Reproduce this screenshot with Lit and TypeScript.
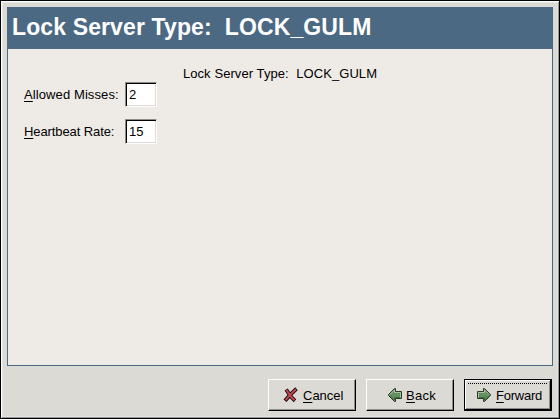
import { LitElement, html, svg, css } from "lit";
import { customElement, property } from "lit/decorators.js";

const arrow = svg`
  <path d="M1.500 4.500H7.500V1.500H8.500L14.500 7.500V8.500L8.500 14.500H7.500V11.500H1.500Z" fill="#648f60" stroke="#2b3a29" stroke-width="1"/>
  <path d="M2.500 10.500V5.500H8.500V3L13 7.500" fill="none" stroke="#a5bfa0"/>
  <path d="M3 10.500H8.500V13L13 8.500" fill="none" stroke="#3f6a39"/>`;

@customElement("wizard-button")
class WizardButton extends LitElement {
  @property() label = "";
  @property() icon = "";
  @property({ type: Boolean, reflect: true }) default = false;

  static styles = css`
    :host { display: block; width: 88px; height: 32px; }
    .button {
      box-sizing: border-box; width: 88px; height: 32px; padding: 0 0 0 14px; margin: 0;
      display: flex; align-items: center; justify-content: flex-start;
      border: 1px solid; border-color: #fff #000 #000 #fff; border-radius: 0;
      background: #dcdad5; color: #000; outline: none;
      box-shadow: inset -1px -1px #8d8b87;
      font: 13px/16px "Liberation Sans", Arial, sans-serif;
    }
    .back { padding-left: 20px; letter-spacing: 0.3px; }
    .forward { padding-left: 11px; letter-spacing: -0.25px; }
    :host([default]) .button {
      border-color: #000; position: relative;
      box-shadow: inset -1px -1px #000, inset 1px 1px #fff, inset -2px -2px #8d8b87;
    }
    :host([default]) .button::after {
      content: ""; position: absolute; left: 3px; right: 3px; top: 3px; height: 1px;
      background: repeating-linear-gradient(90deg, #000 0 1px, transparent 1px 2px);
    }
    svg { width: 16px; height: 16px; margin-right: 4px; flex: none; }
    .flip { transform: scaleX(-1); margin-right: 3px; }
    .key { text-decoration: underline; text-underline-offset: 2px; text-decoration-thickness: 1px; text-decoration-skip-ink: none; }
    .text { padding-top: 2px; }
  `;

  render() {
    return html`<button class="button ${this.icon}">
      ${this.icon === "cancel"
        ? html`<svg viewBox="0 0 16 16">
            <path d="M3.200 2.500L5.500 6Q8 10.500 12 13.800M13.500 1.800Q8 6.500 2 13.800" fill="none" stroke="#1c0809" stroke-width="3.800"/>
            <path d="M3.500 3L5.500 6Q8 10.500 11.600 13.300M13 2.300Q8 6.500 2.500 13.200" fill="none" stroke="#c04a51" stroke-width="2"/>
          </svg>`
        : html`<svg class=${this.icon === "back" ? "flip" : ""} viewBox="0 0 16 16">${arrow}</svg>`}
      <span class="text"><span class="key">${this.label[0]}</span>${this.label.slice(1)}</span>
    </button>`;
  }
}

@customElement("app-root")
class AppRoot extends LitElement {
  static styles = css`
    :host {
      box-sizing: border-box; display: flex; flex-direction: column;
      width: 560px; height: 419px; overflow: hidden; padding: 6px;
      border: 1px solid #000; background: #dcdad5; color: #000;
      box-shadow: inset 1px 1px #fff, inset -1px -1px #969492, inset 0 0 0 2px #e6e4e3;
      font: 13px/16px "Liberation Sans", Arial, sans-serif;
    }
    .page { box-sizing: border-box; width: 546px; height: 359px; border: 1px solid #4b6983; background: #eeebe7; }
    .title {
      box-sizing: border-box; height: 41px; margin: 0; padding: 5px 0 0 4px;
      background: #4b6983; color: #fff; font-size: 23px; font-weight: bold; line-height: 28px;
      letter-spacing: 0.12px; white-space: pre;
    }
    .caption { margin: 16px 0 0; text-align: center; white-space: pre; line-height: 18px; letter-spacing: 0.08px; }
    .form { display: grid; grid-template-columns: 101px 32px; row-gap: 12px; padding-left: 16px; align-items: center; margin-top: -1px; }
    .misses { letter-spacing: 0.1px; }
    .rate { letter-spacing: -0.1px; }
    .key { text-decoration: underline; text-underline-offset: 2px; text-decoration-thickness: 1px; text-decoration-skip-ink: none; }
    .entry {
      box-sizing: border-box; width: 32px; height: 25px; margin: 0; padding: 0 2px 0 3px;
      border: 1px solid; border-color: #8d8b87 #fff #fff #8d8b87; border-radius: 0;
      box-shadow: inset 1px 1px #000, inset -1px -1px #dcdad5;
      background: #fff; font: inherit; color: #000; outline: none;
    }
    .actions { display: flex; justify-content: flex-end; gap: 10px; padding: 13px 1px 0 0; }
  `;

  render() {
    return html`
      <div class="page">
        <h1 class="title">Lock Server Type:  LOCK_GULM</h1>
        <p class="caption">Lock Server Type:  LOCK_GULM</p>
        <div class="form">
          <label class="misses" for="misses"><span class="key">A</span>llowed Misses:</label>
          <input class="entry" id="misses" value="2">
          <label class="rate" for="rate"><span class="key">H</span>eartbeat Rate:</label>
          <input class="entry" id="rate" value="15">
        </div>
      </div>
      <div class="actions">
        <wizard-button label="Cancel" icon="cancel"></wizard-button>
        <wizard-button label="Back" icon="back"></wizard-button>
        <wizard-button label="Forward" icon="forward" default></wizard-button>
      </div>`;
  }
}
